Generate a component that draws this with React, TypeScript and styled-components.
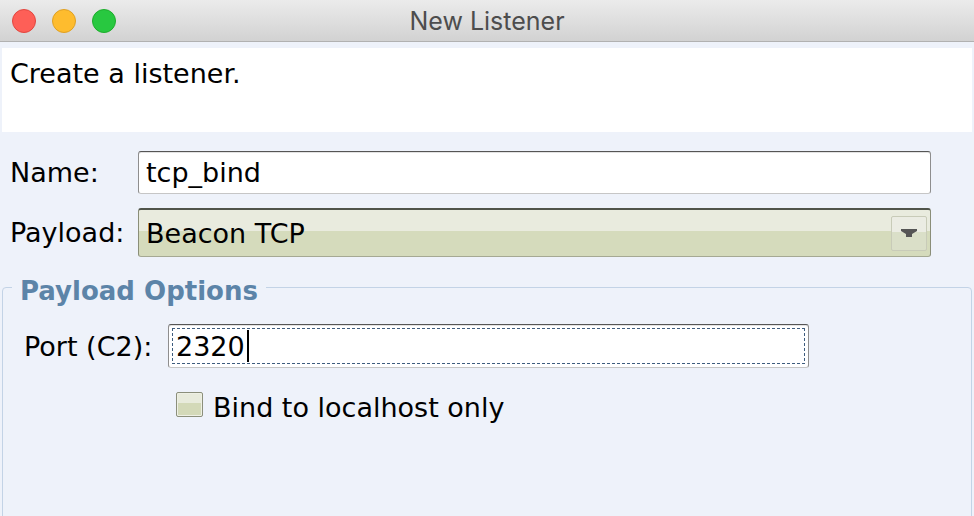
import React from 'react';
import styled, { createGlobalStyle } from 'styled-components';

const GlobalStyle = createGlobalStyle`
  html, body {
    margin: 0;
    padding: 0;
    background: #eef2fa;
  }
  body {
    font-family: "DejaVu Sans", "Liberation Sans", sans-serif;
    color: #000;
  }
  #root {
    height: 516px;
    overflow: hidden;
  }
`;

const Window = styled.div`
  display: flex;
  flex-direction: column;
  width: 974px;
  height: 516px;
  overflow: hidden;
  background: #eef2fa;
`;

const TitleBar = styled.div`
  display: grid;
  grid-template-columns: 1fr auto 1fr;
  align-items: center;
  height: 41px;
  flex-shrink: 0;
  background: linear-gradient(#ebebeb, #d2d2d2);
  border-bottom: 1px solid #b1b1b1;
`;

const Lights = styled.div`
  display: flex;
  gap: 16px;
  padding-left: 12px;
`;

const Light = styled.span<{ fill: string; ring: string }>`
  width: 24px;
  height: 24px;
  border-radius: 50%;
  box-sizing: border-box;
  background: ${({ fill }) => fill};
  border: 1px solid ${({ ring }) => ring};
`;

const Title = styled.div`
  font-family: Inter, "Liberation Sans", sans-serif;
  font-size: 25px;
  color: #4d4d4d;
`;

const Intro = styled.div`
  margin: 6px 2px 0;
  height: 84px;
  flex-shrink: 0;
  background: #fff;
  padding: 10px 8px 0;
  box-sizing: border-box;
  font-size: 27px;
`;

const FormGrid = styled.div`
  display: grid;
  grid-template-columns: 128px 793px;
  row-gap: 14px;
  margin-top: 19px;
  padding-left: 10px;
  align-items: center;
`;

const Label = styled.div`
  font-size: 27px;
  white-space: nowrap;
`;

const dash = '#3d5c7e 0 3px, transparent 3px 5px';

const TextField = styled.div<{ h: number; focused?: boolean }>`
  position: relative;
  display: flex;
  align-items: center;
  height: ${({ h }) => h}px;
  box-sizing: border-box;
  padding-left: 7px;
  background: #fff;
  border: 1px solid #8e8e8e;
  border-top-color: #555;
  border-bottom-color: #c6c6c6;
  border-radius: 3px;
  box-shadow: inset 0 1px 0 #e2e2e2;
  font-size: 27px;
  ${({ focused }) =>
    focused &&
    `
    &::after {
      content: "";
      position: absolute;
      inset: 3px;
      pointer-events: none;
      background:
        repeating-linear-gradient(90deg, ${dash}) top / 100% 1px no-repeat,
        repeating-linear-gradient(90deg, ${dash}) bottom / 100% 1px no-repeat,
        repeating-linear-gradient(180deg, ${dash}) left / 1px 100% no-repeat,
        repeating-linear-gradient(180deg, ${dash}) right / 1px 100% no-repeat;
    }
  `}
`;

const Caret = styled.span`
  display: inline-block;
  width: 2px;
  height: 32px;
  background: #000;
  margin-left: 2px;
`;

const Combo = styled.div`
  display: flex;
  align-items: center;
  justify-content: space-between;
  height: 49px;
  box-sizing: border-box;
  padding: 0 3px 0 7px;
  border: 1px solid #8a8e78;
  border-top: 2px solid #50544a;
  border-bottom-color: #a5a993;
  border-radius: 3px;
  background: linear-gradient(#e9ebde 0 45%, #d5dbbc 45%);
  font-size: 27px;
`;

const ComboButton = styled.div`
  display: flex;
  align-items: center;
  justify-content: center;
  width: 36px;
  height: 35px;
  box-sizing: border-box;
  border: 1px solid #c8cbb8;
  border-radius: 2px;
  background: linear-gradient(#ebece3 0 45%, #dadfc8 45%);
`;

const GroupBox = styled.fieldset`
  flex: 1;
  margin: 11px 2px 0;
  padding: 18px 0 0 9px;
  min-height: 300px;
  border: 1px solid #c3d3e6;
  border-radius: 4px 4px 0 0;
  min-width: 0;
`;

const GroupTitle = styled.legend`
  padding: 8px 8px 0;
  font-size: 26px;
  font-weight: bold;
  line-height: 30px;
  color: #5c84a8;
`;

const OptionGrid = styled.div`
  display: grid;
  grid-template-columns: 144px 641px;
  row-gap: 24px;
  padding-left: 12px;
  align-items: center;
`;

const CheckRow = styled.label`
  grid-column: 2;
  display: flex;
  align-items: center;
  gap: 10px;
  margin-left: 8px;
  font-size: 27px;
`;

const CheckBox = styled.span`
  width: 27px;
  height: 25px;
  margin-bottom: 6px;
  box-sizing: border-box;
  border: 1px solid #8b8f7b;
  border-radius: 2px;
  background: linear-gradient(#e8ebdc 0 45%, #d3d9b8 45%);
  box-shadow: inset 0 0 0 1px #eef0e4;
`;

const ArrowIcon = () => (
  <svg width="16" height="8" viewBox="0 0 16 8">
    <polygon points="0,0 16,0 16,2 11,5 11,8 5,8 5,5 0,2" fill="#555" />
  </svg>
);

export default function App() {
  return (
    <>
      <GlobalStyle />
      <Window>
        <TitleBar>
          <Lights>
            <Light fill="#fe5f57" ring="#e2463f" />
            <Light fill="#febc2e" ring="#dfa023" />
            <Light fill="#28c840" ring="#1dad2b" />
          </Lights>
          <Title>New Listener</Title>
          <span />
        </TitleBar>

        <Intro>Create a listener.</Intro>

        <FormGrid>
          <Label>Name:</Label>
          <TextField h={43}>tcp_bind</TextField>
          <Label>Payload:</Label>
          <Combo>
            <span>Beacon TCP</span>
            <ComboButton>
              <ArrowIcon />
            </ComboButton>
          </Combo>
        </FormGrid>

        <GroupBox>
          <GroupTitle>Payload Options</GroupTitle>
          <OptionGrid>
            <Label>Port (C2):</Label>
            <TextField h={44} focused>
              2320
              <Caret />
            </TextField>
            <CheckRow>
              <CheckBox />
              Bind to localhost only
            </CheckRow>
          </OptionGrid>
        </GroupBox>
      </Window>
    </>
  );
}
